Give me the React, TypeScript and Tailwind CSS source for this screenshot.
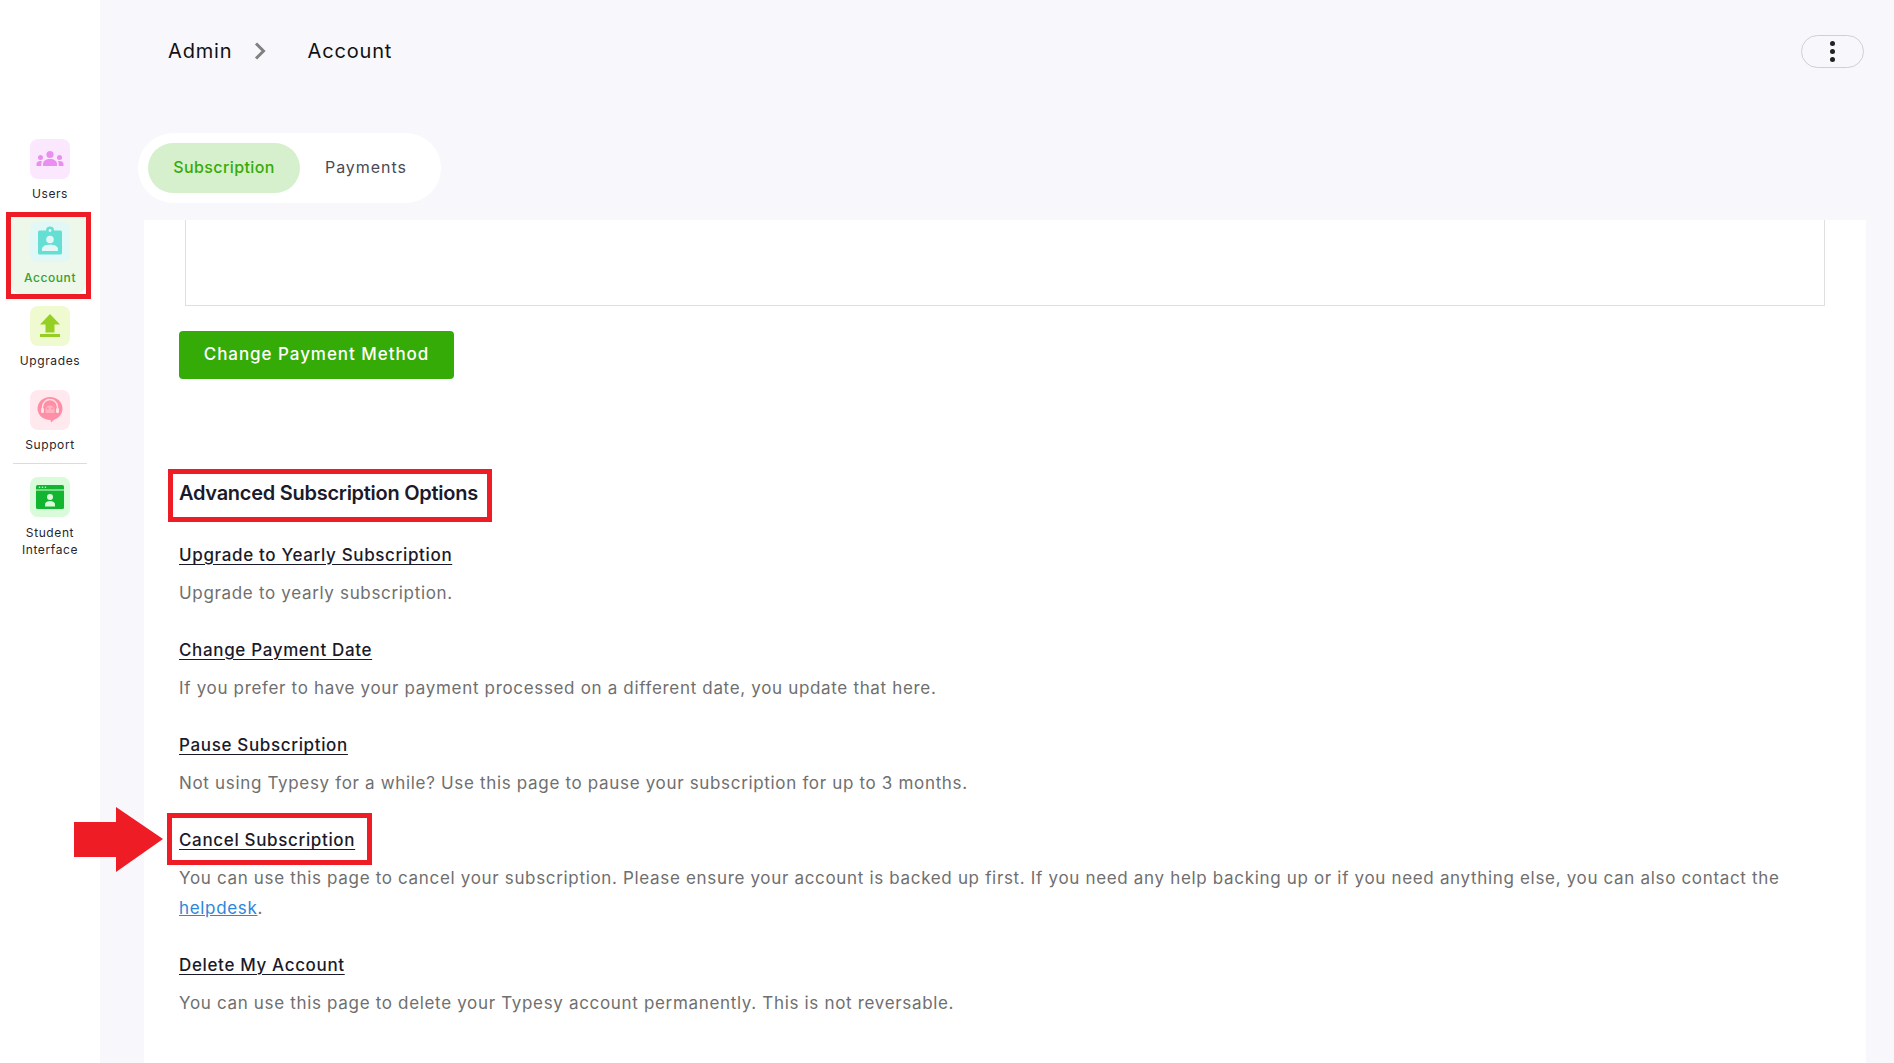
import type { ReactNode } from "react";

const font = "font-['Inter','Noto_Sans',sans-serif]";

function UsersIcon() {
  return (
    <svg viewBox="0 0 40 40" className="w-10 h-10">
      <g fill="#e88ff0">
        <circle cx="20" cy="15.5" r="3.6" />
        <path d="M13 27v-2c0-3 2.800-5 7-5s7 2 7 5v2z" />
        <circle cx="10.500" cy="18.500" r="2.500" />
        <path d="M6.500 27v-2c0-2 1.600-3 4.200-3 .5 0 .9 0 1.300.1-.5.900-.7 1.900-.7 2.900v2z" />
        <circle cx="29.500" cy="18.500" r="2.500" />
        <path d="M33.500 27v-2c0-2-1.600-3-4.200-3-.5 0-.9 0-1.300.1.500.9.700 1.900.7 2.900v2z" />
      </g>
    </svg>
  );
}

function AccountIcon() {
  return (
    <svg viewBox="0 0 40 40" className="w-10 h-10">
      <path fill="#65dfd3" d="M8 10a1.500 1.500 0 0 1 1.500-1.500H16a4 4 0 0 1 8 0h6.500A1.500 1.500 0 0 1 32 10v21a1.500 1.500 0 0 1-1.500 1.500h-21A1.500 1.500 0 0 1 8 31z" />
      <circle cx="20" cy="8.500" r="1.400" fill="#e3f8f6" />
      <circle cx="20" cy="17.500" r="3.800" fill="#e3f8f6" />
      <path fill="#e3f8f6" d="M12 29v-2c0-2.800 3.500-4.300 8-4.300s8 1.500 8 4.300v2z" />
    </svg>
  );
}

function UpgradeIcon() {
  return (
    <svg viewBox="0 0 40 40" className="w-10 h-10">
      <path fill="#96cf24" d="M20 8l10 10.500h-5.500v8h-9v-8H10z" />
      <rect x="10" y="28" width="20" height="3" fill="#96cf24" />
    </svg>
  );
}

function SupportIcon() {
  return (
    <svg viewBox="0 0 40 40" className="w-10 h-10">
      <path fill="#ff8fa6" d="M20 7c7 0 12.500 5 12.500 11.500 0 5.500-3.500 9.500-8 11l-3.500 3-.5-2.500C13 30 7.500 25 7.500 18.500 7.500 12 13 7 20 7z" />
      <path fill="none" stroke="#ffe0e6" strokeWidth="1.400" d="M12.500 20v-3a7.500 7.500 0 0 1 15 0v3" />
      <rect x="11" y="18" width="3" height="5" rx="1.200" fill="#ffe0e6" />
      <rect x="26" y="18" width="3" height="5" rx="1.200" fill="#ffe0e6" />
      <path fill="#ffe0e6" d="M15.500 23v-3a4.500 4.500 0 0 1 9 0v3z" opacity=".45" />
      <circle cx="17.800" cy="18.500" r="1" fill="#ff8fa6" />
      <circle cx="22.200" cy="18.500" r="1" fill="#ff8fa6" />
    </svg>
  );
}

function StudentIcon() {
  return (
    <svg viewBox="0 0 40 40" className="w-10 h-10">
      <rect x="6" y="8" width="28" height="24" rx="1.500" fill="#12b52f" />
      <rect x="6" y="12.500" width="28" height="1" fill="#dcfbdc" />
      <circle cx="9.500" cy="10.300" r=".8" fill="#dcfbdc" />
      <circle cx="12.500" cy="10.300" r=".8" fill="#dcfbdc" />
      <circle cx="15.500" cy="10.300" r=".8" fill="#dcfbdc" />
      <circle cx="20" cy="20" r="3" fill="#dcfbdc" />
      <path fill="#dcfbdc" d="M15 29.500v-2c0-2.300 2.200-3.500 5-3.500s5 1.200 5 3.500v2z" />
    </svg>
  );
}

function NavItem({ icon, tile, label, active, h, lower }: { icon: ReactNode; tile: string; label: ReactNode; active?: boolean; h?: string; lower?: boolean }) {
  return (
    <div className={`flex flex-col items-center ${h ?? "h-[84px]"}`}>
      <div className={`w-10 h-10 rounded-lg flex items-center justify-center ${tile}`}>{icon}</div>
      <div className={`${lower ? "mt-[7px]" : "mt-[6px]"} text-[12px] leading-[17px] text-center tracking-[0.6px] ${active ? "text-[#35a02c] font-medium" : "text-[#26262e]"}`}>
        {label}
      </div>
    </div>
  );
}

function Sidebar() {
  return (
    <aside className="w-[100px] shrink-0 bg-white pt-[139px] flex flex-col relative">
      <NavItem icon={<UsersIcon />} tile="bg-[#fbe8fe]" label="Users" h="h-[83px]" />
      <div className="relative">
        <div className="absolute left-[6px] top-[-10px] w-[85px] h-[87px] border-[5px] border-[#ee1c25]">
          <div className="w-full h-full bg-[#edf7ea] rounded-b-[10px]" />
        </div>
        <div className="relative">
          <NavItem icon={<AccountIcon />} tile="bg-[#e2f8f6]" label="Account" active lower />
        </div>
      </div>
      <NavItem icon={<UpgradeIcon />} tile="bg-[#f0fad0]" label="Upgrades" />
      <NavItem icon={<SupportIcon />} tile="bg-[#ffe9ee]" label="Support" />
      <div className="mx-[13px] h-[1px] bg-[#dcdcdc] mt-[-11px] mb-[13px]" />
      <NavItem icon={<StudentIcon />} tile="bg-[#d9fbd9]" label={<>Student<br />Interface</>} lower />
    </aside>
  );
}

function OptionRow({ title, boxed, children }: { title: string; boxed?: boolean; children: ReactNode }) {
  return (
    <div className="mb-[29px]">
      <div className="relative w-fit">
        <a className="block text-[17px] leading-[26px] font-medium text-[#1a1a2a] underline underline-offset-[3px] tracking-[0.65px]">{title}</a>
        {boxed && <div className="absolute left-[-12px] top-[-14px] right-[-17px] bottom-[-12px] border-[5px] border-[#ee1c25]" />}
      </div>
      <p className="mt-[10px] text-[17px] leading-[30px] text-[#6f6f6f] tracking-[0.67px]">{children}</p>
    </div>
  );
}

export default function App() {
  return (
    <div className={`${font} flex h-[1063px] w-full overflow-hidden bg-[#f7f7fc] relative`}>
      <Sidebar />
      <main className="flex-1 min-w-0 flex flex-col">
        <header className="h-[133px] shrink-0 flex items-start justify-between pl-[68px] pr-[30px] pt-[35px]">
          <div className="flex items-center h-[32px] text-[20px] text-[#111] tracking-[0.85px]">
            <span>Admin</span>
            <svg viewBox="0 0 12 18" className="w-[12px] h-[18px] ml-[22px] mr-[41px]">
              <path d="M2 1.500 L9.500 9 L2 16.500" fill="none" stroke="#808080" strokeWidth="3" />
            </svg>
            <span>Account</span>
          </div>
          <button className="w-[63px] h-[33px] rounded-full border border-[#cfcfd4] flex flex-col items-center justify-center gap-[3px]">
            <span className="w-[5px] h-[5px] rounded-full bg-[#222]" />
            <span className="w-[5px] h-[5px] rounded-full bg-[#222]" />
            <span className="w-[5px] h-[5px] rounded-full bg-[#222]" />
          </button>
        </header>
        <div className="ml-[38px] w-[303px] h-[70px] rounded-[35px] bg-white flex items-center pl-[10px] shrink-0">
          <div className="w-[152px] h-[50px] rounded-[25px] bg-[#d6f0cd] flex items-center justify-center pb-[3px] text-[16px] font-medium text-[#35ab07] tracking-[0.4px]">
            Subscription
          </div>
          <div className="ml-[25px] pb-[3px] text-[16px] text-[#4a4a55] tracking-[0.95px]">Payments</div>
        </div>
        <section className="mt-[17px] ml-[44px] mr-[28px] flex-1 bg-white px-[35px]">
          <div className="h-[86px] mx-[6px] border-x border-b border-[#dfdfdf]" />
          <button className="mt-[25px] w-[275px] h-[48px] rounded-[4px] bg-[#35ab07] text-white text-[17px] font-medium tracking-[0.95px]">
            Change Payment Method
          </button>
          <div className="relative w-fit mt-[99px] mb-[34px]">
            <h2 className="text-[20px] leading-[30px] font-semibold text-[#1a1a2a] tracking-[-0.27px]">Advanced Subscription Options</h2>
            <div className="absolute left-[-11px] top-[-9px] right-[-14px] bottom-[-14px] border-[5px] border-[#ee1c25]" />
          </div>
          <OptionRow title="Upgrade to Yearly Subscription">Upgrade to yearly subscription.</OptionRow>
          <OptionRow title="Change Payment Date">If you prefer to have your payment processed on a different date, you update that here.</OptionRow>
          <OptionRow title="Pause Subscription">Not using Typesy for a while? Use this page to pause your subscription for up to 3 months.</OptionRow>
          <OptionRow title="Cancel Subscription" boxed>
            You can use this page to cancel your subscription. Please ensure your account is backed up first. If you need any help backing up or if you need anything else, you can also contact the{" "}
            <a className="text-[#2d86d9] underline">helpdesk</a>.
          </OptionRow>
          <OptionRow title="Delete My Account">You can use this page to delete your Typesy account permanently. This is not reversable.</OptionRow>
        </section>
      </main>
      <svg viewBox="0 0 90 66" className="absolute left-[74px] top-[807px] w-[90px] h-[66px]">
        <path d="M0 15H42V0L89 32L42 65V50H0z" fill="#ee1c25" />
      </svg>
    </div>
  );
}
